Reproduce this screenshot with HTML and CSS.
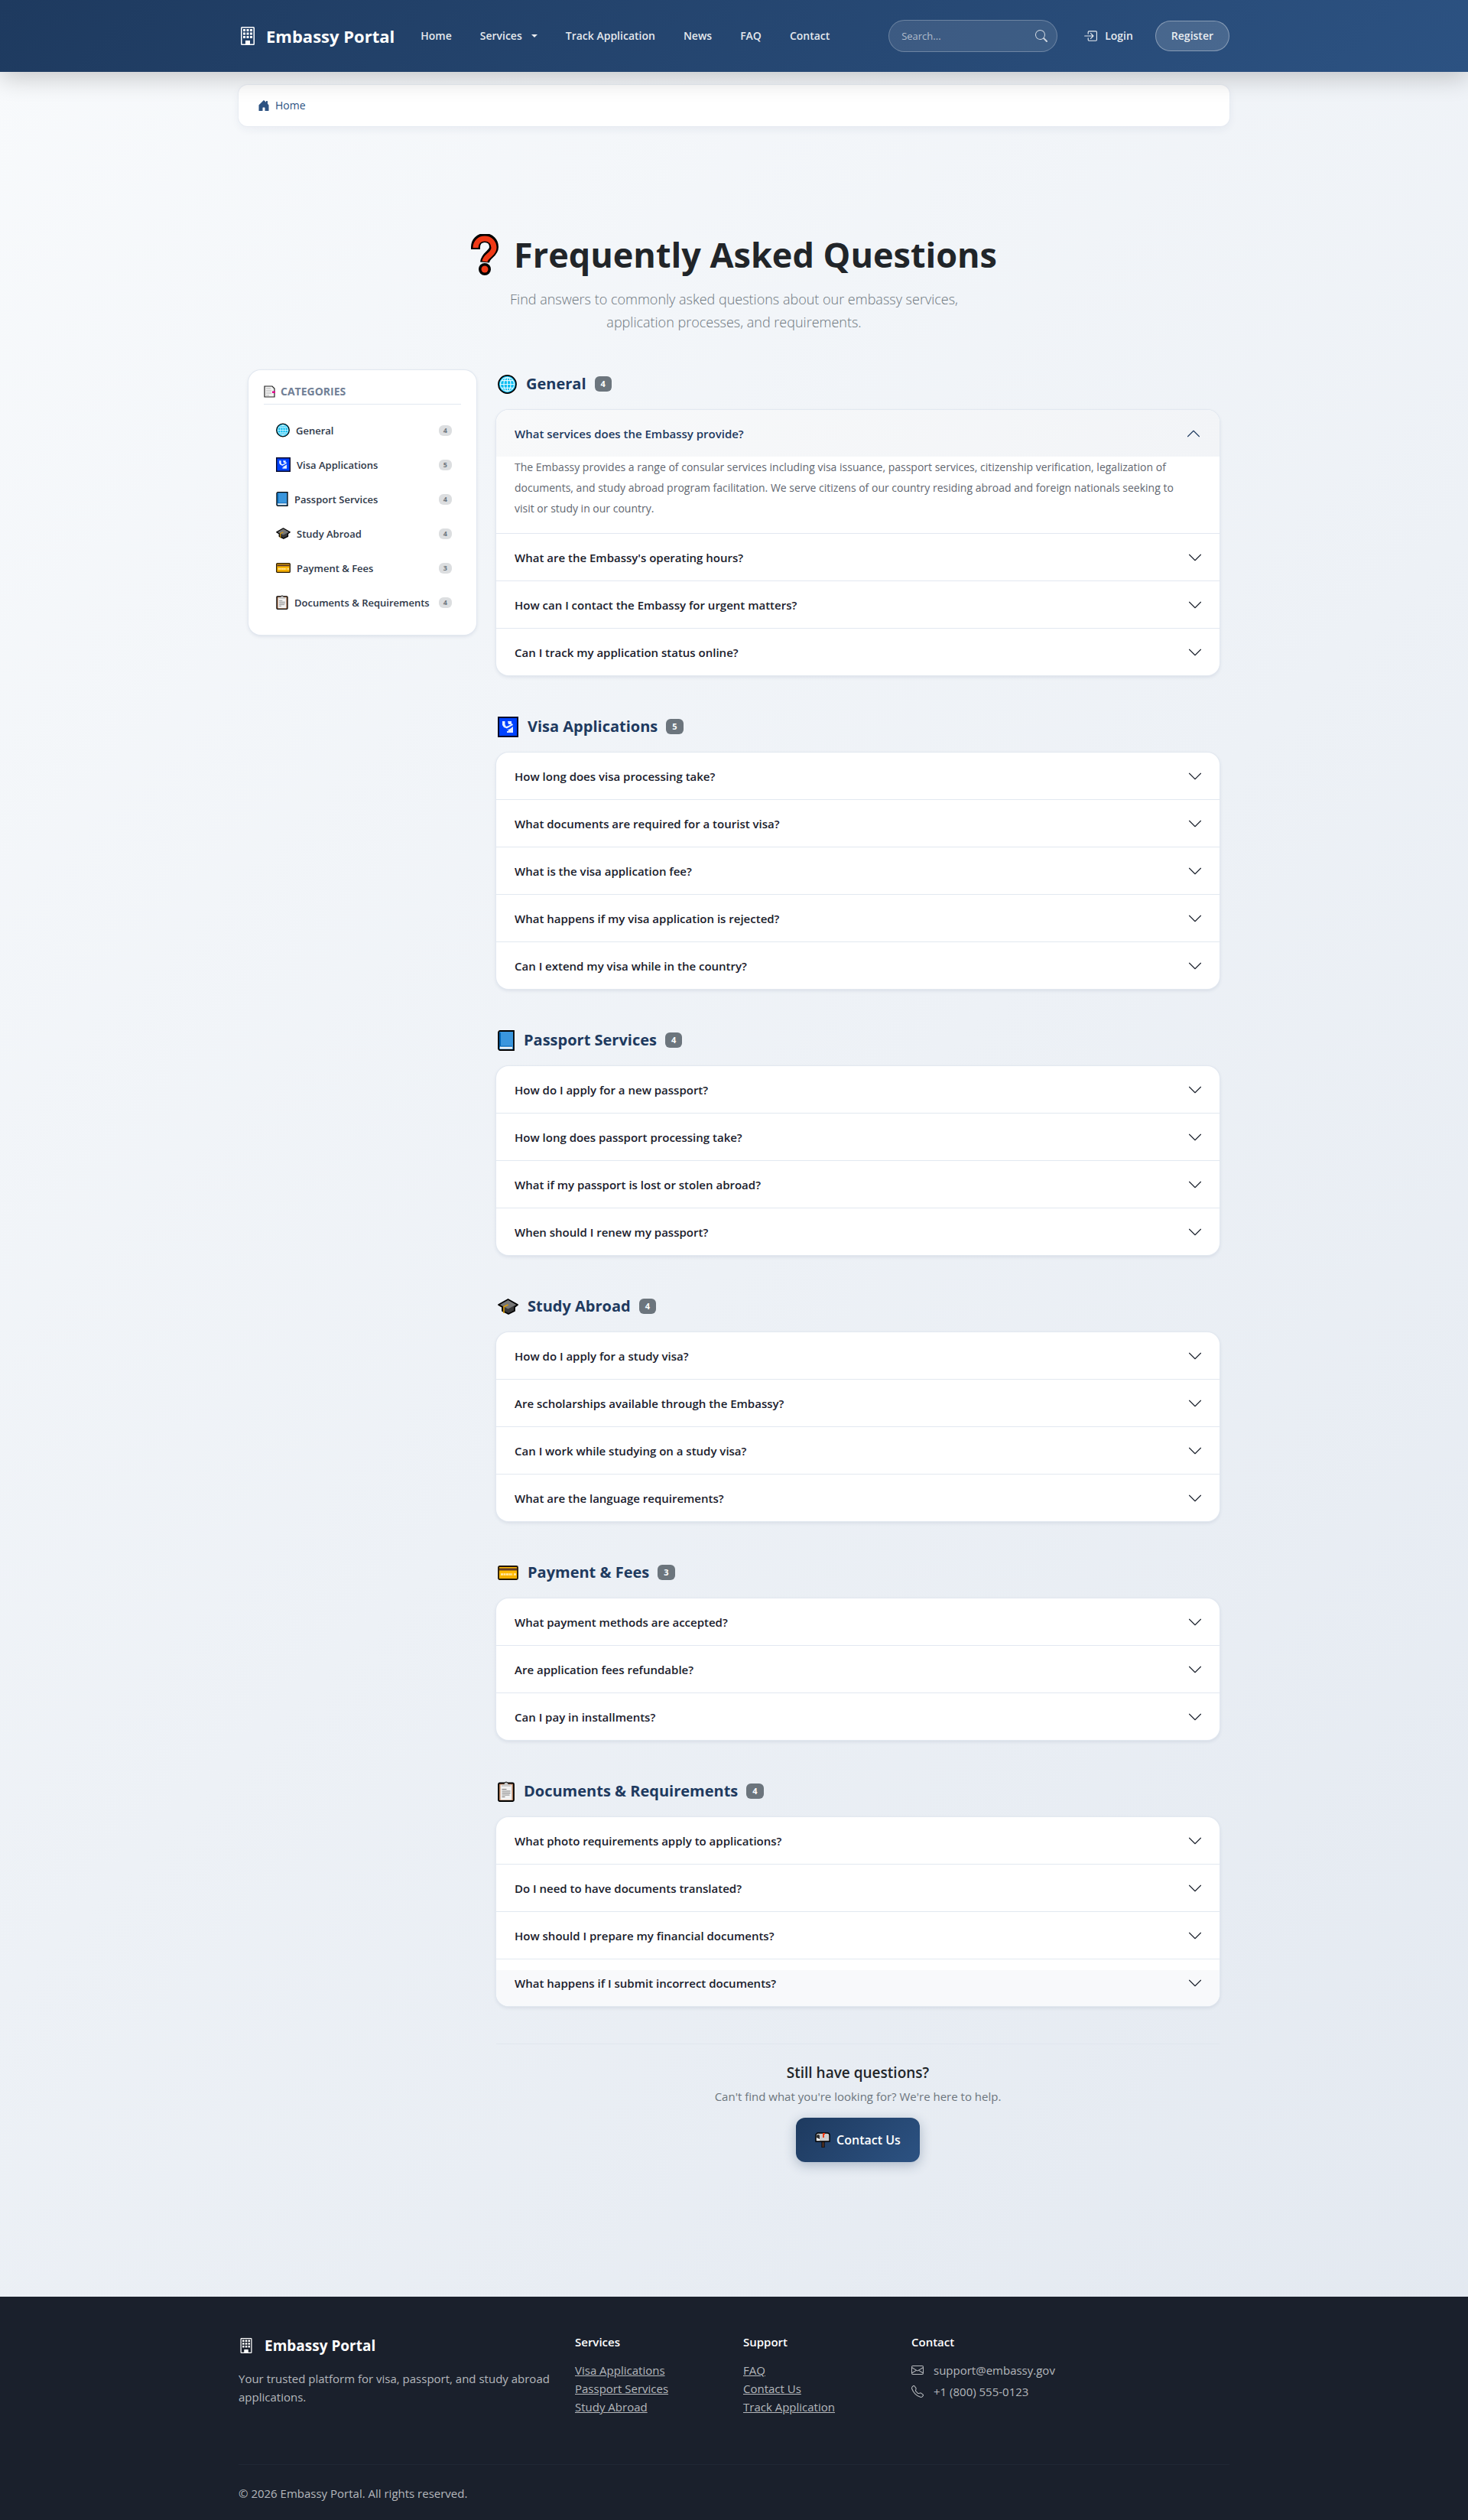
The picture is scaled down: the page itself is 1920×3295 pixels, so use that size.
FILE: index.html
```
<!DOCTYPE html>
<html lang="en">
<head>
<meta charset="utf-8">
<meta name="viewport" content="width=device-width, initial-scale=1">
<title>FAQ - Embassy Portal</title>
<link rel="stylesheet" href="styles.css">
</head>
<body>

<!-- shared icons -->
<svg class="sprite" aria-hidden="true">
  <symbol id="i-building" viewBox="0 0 16 16">
    <path fill-rule="evenodd" d="M3 0h10a1 1 0 0 1 1 1v14a1 1 0 0 1-1 1H3a1 1 0 0 1-1-1V1a1 1 0 0 1 1-1zm0 1v14h3v-2.500a.5.5 0 0 1 .5-.5h3a.5.5 0 0 1 .5.5V15h3V1z"/>
    <path d="M4 2h2v2H4zM7 2h2v2H7zM10 2h2v2h-2zM4 5h2v2H4zM7 5h2v2H7zM10 5h2v2h-2zM4 8h2v2H4zM7 8h2v2H7zM10 8h2v2h-2zM6 12h4v3.500H6z"/>
  </symbol>
  <symbol id="i-house" viewBox="0 0 16 16">
    <path d="M6.500 14.500v-3.505c0-.245.25-.495.5-.495h2c.25 0 .5.25.5.5v3.500a.5.5 0 0 0 .5.5h4a.5.5 0 0 0 .5-.5v-7a.5.5 0 0 0-.146-.354L13 5.793V2.500a.5.5 0 0 0-.5-.5h-1a.5.5 0 0 0-.5.5v1.293L8.354 1.146a.5.5 0 0 0-.708 0l-6 6A.5.5 0 0 0 1.500 7.500v7a.5.5 0 0 0 .5.5h4a.5.5 0 0 0 .5-.5"/>
  </symbol>
  <symbol id="i-search" viewBox="0 0 16 16">
    <path d="M11.742 10.344a6.500 6.500 0 1 0-1.397 1.398h-.001q.044.06.098.115l3.850 3.850a1 1 0 0 0 1.415-1.414l-3.850-3.850a1 1 0 0 0-.115-.1zM12 6.500a5.500 5.500 0 1 1-11 0 5.500 5.500 0 0 1 11 0"/>
  </symbol>
  <symbol id="i-login" viewBox="0 0 16 16">
    <path d="M6 3.500a.5.5 0 0 1 .5-.5h8a.5.5 0 0 1 .5.5v9a.5.5 0 0 1-.5.5h-8a.5.5 0 0 1-.5-.5v-2a.5.5 0 0 0-1 0v2A1.500 1.500 0 0 0 6.500 14h8a1.500 1.500 0 0 0 1.500-1.500v-9A1.500 1.500 0 0 0 14.500 2h-8A1.500 1.500 0 0 0 5 3.500v2a.5.5 0 0 0 1 0z"/>
    <path d="M11.854 8.354a.5.5 0 0 0 0-.708l-3-3a.5.5 0 1 0-.708.708L10.293 7.500H1.500a.5.5 0 0 0 0 1h8.793l-2.147 2.146a.5.5 0 0 0 .708.708z"/>
  </symbol>
  <symbol id="i-chevron" viewBox="0 0 16 16">
    <path d="M2 5l6 6 6-6" fill="none" stroke="currentColor" stroke-width=".9" stroke-linecap="round" stroke-linejoin="round"/>
  </symbol>
  <symbol id="i-mail" viewBox="0 0 16 16">
    <path d="M0 4a2 2 0 0 1 2-2h12a2 2 0 0 1 2 2v8a2 2 0 0 1-2 2H2a2 2 0 0 1-2-2zm2-1a1 1 0 0 0-1 1v.217l7 4.200 7-4.200V4a1 1 0 0 0-1-1zm13 2.383-4.708 2.825L15 11.105zm-.034 6.876-5.640-3.471L8 9.583l-1.326-.795-5.640 3.470A1 1 0 0 0 2 13h12a1 1 0 0 0 .966-.741M1 11.105l4.708-2.897L1 5.383z"/>
  </symbol>
  <symbol id="i-phone" viewBox="0 0 16 16">
    <path d="M3.654 1.328a.678.678 0 0 0-1.015-.063L1.605 2.300c-.483.484-.661 1.169-.45 1.770a17.600 17.600 0 0 0 4.168 6.608 17.600 17.600 0 0 0 6.608 4.168c.601.211 1.286.033 1.770-.45l1.034-1.034a.678.678 0 0 0-.063-1.015l-2.307-1.794a.68.68 0 0 0-.58-.122l-2.190.547a1.750 1.750 0 0 1-1.657-.459L5.482 8.062a1.750 1.750 0 0 1-.46-1.657l.548-2.190a.68.68 0 0 0-.122-.58zM1.884.511a1.745 1.745 0 0 1 2.612.163L6.290 2.980c.329.423.445.974.315 1.494l-.547 2.190a.68.68 0 0 0 .178.643l2.457 2.457a.68.68 0 0 0 .644.178l2.189-.547a1.750 1.750 0 0 1 1.494.315l2.306 1.794c.829.645.905 1.870.163 2.611l-1.034 1.034c-.74.740-1.846 1.065-2.877.702a18.600 18.600 0 0 1-7.010-4.420 18.600 18.600 0 0 1-4.420-7.009c-.362-1.030-.037-2.137.703-2.877z"/>
  </symbol>

  <symbol id="e-question" viewBox="0 0 36 54">
    <path d="M6 20v-3C6 10 11 5 18 5s12 5 12 12c0 9-11 10-12 20" fill="none" stroke="#000" stroke-width="12"/>
    <circle cx="18" cy="46" r="8" fill="#000"/>
    <path d="M6 17C6 10 11 5 18 5s12 5 12 12c0 9-11 10-12 18" fill="none" stroke="#f03a17" stroke-width="7" transform="translate(0 1)"/>
    <circle cx="18" cy="46" r="4.500" fill="#f03a17"/>
  </symbol>
  <symbol id="e-tabs" viewBox="0 0 16 16">
    <path d="M1 1h10l3 3v11H1z" fill="#f2f2f2" stroke="#222" stroke-width="1.200"/>
    <path d="M3 4h6M3 7h7M3 10h7M3 13h4" stroke="#b5b5b5"/>
    <path d="M11 7.500h4v2.500h-4z" fill="#e3008c"/>
  </symbol>
  <symbol id="e-globe" viewBox="0 0 26 26">
    <circle cx="13" cy="13" r="12" fill="#00bcf2" stroke="#000" stroke-width="1.800"/>
    <g fill="none" stroke="#e6f8fe" stroke-width="1.200">
      <circle cx="13" cy="13" r="9.500"/>
      <ellipse cx="13" cy="13" rx="4.700" ry="9.500"/>
      <path d="M13 3v20M3 13h20M5 8h16M5 18h16"/>
    </g>
  </symbol>
  <symbol id="e-passport-control" viewBox="0 0 27 27">
    <path d="M1 1h25v25H1z" fill="#0042ff" stroke="#05082b" stroke-width="2"/>
    <path d="M6 6h3.500v4.500L11 13l3-1 5-3 1 2-8 4.500-4-1.500-2-3z" fill="#e8f0ff"/>
    <path d="M13 6h5v4h-4zM20 13v8h-8v-2h2v-1h-2l4-2z" fill="#e8f0ff"/>
  </symbol>
  <symbol id="e-book" viewBox="0 0 22 27">
    <path d="M3 1h18v25H3a2 2 0 0 1-2-2V3a2 2 0 0 1 2-2z" fill="#3a96dd" stroke="#000" stroke-width="1.800"/>
    <path d="M2 3h2v19H2z" fill="#0063b1"/>
    <path d="M3 21.500h16v3H3z" fill="#f2f2f2"/>
    <path d="M4 21h15" stroke="#0063b1"/>
  </symbol>
  <symbol id="e-cap" viewBox="0 0 27 21">
    <path d="M13.500 1L26 8l-4 3v5l-8 4-8-4v-5L1 8z" fill="#383838" stroke="#000" stroke-width="1.800" stroke-linejoin="round"/>
    <path d="M13.500 2L24 8l-10.500 5.500L3 8z" fill="#767676"/>
    <path d="M13.500 8L8 10.500V19" fill="none" stroke="#e09d00" stroke-width="1.500"/>
  </symbol>
  <symbol id="e-card" viewBox="0 0 27 19">
    <rect x="1" y="1" width="25" height="17" rx="1.500" fill="#ffb900" stroke="#201300" stroke-width="1.800"/>
    <path d="M2 3.500h23v3H2z" fill="#603b2a"/>
    <path d="M4 11.500h15M21 11.500h3" stroke="#ffe8a8" stroke-width="2.500" stroke-dasharray="3 .5"/>
    <path d="M3 15h21" stroke="#e09d00"/>
  </symbol>
  <symbol id="e-clipboard" viewBox="0 0 22 27">
    <rect x="1" y="2.500" width="20" height="23.500" rx="1.500" fill="#b9815d" stroke="#000" stroke-width="1.800"/>
    <path d="M3.500 4.500h15v20h-15z" fill="#f2f2f2"/>
    <path d="M5 7V5h3l1-3h4l1 3h3v2z" fill="#ccc"/>
    <path d="M8.500 3.500a2.500 2.500 0 0 1 5 0" fill="none" stroke="#222"/>
    <path d="M5.500 10.500h6M5.500 13h11M5.500 15.500h11M5.500 18h10M5.500 20.500h4" stroke="#767676"/>
  </symbol>
  <symbol id="e-mailbox" viewBox="0 0 20 20">
    <path d="M9 12h3v8H9z" fill="#603b2a" stroke="#000"/>
    <path d="M1 12V4a3 3 0 0 1 3-3h12a3 3 0 0 1 3 3v8z" fill="#ccc" stroke="#000" stroke-width="1.400"/>
    <path d="M2 11V5a2 2 0 0 1 4 0v6z" fill="#333"/>
    <path d="M2 7l4 2v2H2z" fill="#fff"/>
    <path d="M10 1h3v2h-1v4h-2z" fill="#f03a17"/>
  </symbol>
</svg>

<header class="navbar">
  <div class="container navbar-inner">
    <a class="brand" href="#"><svg class="brand-icon"><use href="#i-building"/></svg>Embassy Portal</a>
    <nav class="nav">
      <a href="#">Home</a>
      <a class="dropdown" href="#">Services</a>
      <a href="#">Track Application</a>
      <a href="#">News</a>
      <a href="#">FAQ</a>
      <a href="#">Contact</a>
    </nav>
    <form class="search" role="search">
      <input type="search" placeholder="Search..." aria-label="Search">
      <button type="submit" aria-label="Search"><svg><use href="#i-search"/></svg></button>
    </form>
    <a class="login" href="#"><svg><use href="#i-login"/></svg>Login</a>
    <a class="register" href="#">Register</a>
  </div>
</header>

<div class="container">
  <nav class="breadcrumb" aria-label="Breadcrumb">
    <a href="#"><svg><use href="#i-house"/></svg>Home</a>
  </nav>
</div>

<main class="faq">
  <div class="faq-header">
    <h1><svg><use href="#e-question"/></svg>Frequently Asked Questions</h1>
    <p>Find answers to commonly asked questions about our embassy services, application processes, and requirements.</p>
  </div>

  <div class="faq-layout">
    <aside class="categories">
      <h2><svg><use href="#e-tabs"/></svg>Categories</h2>
      <ul>
        <li><a href="#general"><svg class="w-globe"><use href="#e-globe"/></svg>General<span class="count">4</span></a></li>
        <li><a href="#visa"><svg class="w-wide"><use href="#e-passport-control"/></svg>Visa Applications<span class="count">5</span></a></li>
        <li><a href="#passport"><svg class="w-slim"><use href="#e-book"/></svg>Passport Services<span class="count">4</span></a></li>
        <li><a href="#study"><svg class="w-wide"><use href="#e-cap"/></svg>Study Abroad<span class="count">4</span></a></li>
        <li><a href="#payment"><svg class="w-wide"><use href="#e-card"/></svg>Payment &amp; Fees<span class="count">3</span></a></li>
        <li><a href="#documents"><svg class="w-slim"><use href="#e-clipboard"/></svg>Documents &amp; Requirements<span class="count">4</span></a></li>
      </ul>
    </aside>

    <div class="faq-content">
      <section class="faq-section" id="general">
        <h2><svg class="w-globe"><use href="#e-globe"/></svg>General<span class="badge">4</span></h2>
        <div class="accordion">
          <div class="item">
            <button class="question open" type="button" aria-expanded="true">What services does the Embassy provide?<svg><use href="#i-chevron"/></svg></button>
            <p class="answer">The Embassy provides a range of consular services including visa issuance, passport services, citizenship verification, legalization of documents, and study abroad program facilitation. We serve citizens of our country residing abroad and foreign nationals seeking to visit or study in our country.</p>
          </div>
          <div class="item"><button class="question" type="button">What are the Embassy's operating hours?<svg><use href="#i-chevron"/></svg></button></div>
          <div class="item"><button class="question" type="button">How can I contact the Embassy for urgent matters?<svg><use href="#i-chevron"/></svg></button></div>
          <div class="item"><button class="question" type="button">Can I track my application status online?<svg><use href="#i-chevron"/></svg></button></div>
        </div>
      </section>

      <section class="faq-section" id="visa">
        <h2><svg class="w-wide"><use href="#e-passport-control"/></svg>Visa Applications<span class="badge">5</span></h2>
        <div class="accordion">
          <div class="item"><button class="question" type="button">How long does visa processing take?<svg><use href="#i-chevron"/></svg></button></div>
          <div class="item"><button class="question" type="button">What documents are required for a tourist visa?<svg><use href="#i-chevron"/></svg></button></div>
          <div class="item"><button class="question" type="button">What is the visa application fee?<svg><use href="#i-chevron"/></svg></button></div>
          <div class="item"><button class="question" type="button">What happens if my visa application is rejected?<svg><use href="#i-chevron"/></svg></button></div>
          <div class="item"><button class="question" type="button">Can I extend my visa while in the country?<svg><use href="#i-chevron"/></svg></button></div>
        </div>
      </section>

      <section class="faq-section" id="passport">
        <h2><svg class="w-slim"><use href="#e-book"/></svg>Passport Services<span class="badge">4</span></h2>
        <div class="accordion">
          <div class="item"><button class="question" type="button">How do I apply for a new passport?<svg><use href="#i-chevron"/></svg></button></div>
          <div class="item"><button class="question" type="button">How long does passport processing take?<svg><use href="#i-chevron"/></svg></button></div>
          <div class="item"><button class="question" type="button">What if my passport is lost or stolen abroad?<svg><use href="#i-chevron"/></svg></button></div>
          <div class="item"><button class="question" type="button">When should I renew my passport?<svg><use href="#i-chevron"/></svg></button></div>
        </div>
      </section>

      <section class="faq-section" id="study">
        <h2><svg class="w-wide"><use href="#e-cap"/></svg>Study Abroad<span class="badge">4</span></h2>
        <div class="accordion">
          <div class="item"><button class="question" type="button">How do I apply for a study visa?<svg><use href="#i-chevron"/></svg></button></div>
          <div class="item"><button class="question" type="button">Are scholarships available through the Embassy?<svg><use href="#i-chevron"/></svg></button></div>
          <div class="item"><button class="question" type="button">Can I work while studying on a study visa?<svg><use href="#i-chevron"/></svg></button></div>
          <div class="item"><button class="question" type="button">What are the language requirements?<svg><use href="#i-chevron"/></svg></button></div>
        </div>
      </section>

      <section class="faq-section" id="payment">
        <h2><svg class="w-wide"><use href="#e-card"/></svg>Payment &amp; Fees<span class="badge">3</span></h2>
        <div class="accordion">
          <div class="item"><button class="question" type="button">What payment methods are accepted?<svg><use href="#i-chevron"/></svg></button></div>
          <div class="item"><button class="question" type="button">Are application fees refundable?<svg><use href="#i-chevron"/></svg></button></div>
          <div class="item"><button class="question" type="button">Can I pay in installments?<svg><use href="#i-chevron"/></svg></button></div>
        </div>
      </section>

      <section class="faq-section" id="documents">
        <h2><svg class="w-slim"><use href="#e-clipboard"/></svg>Documents &amp; Requirements<span class="badge">4</span></h2>
        <div class="accordion">
          <div class="item"><button class="question" type="button">What photo requirements apply to applications?<svg><use href="#i-chevron"/></svg></button></div>
          <div class="item"><button class="question" type="button">Do I need to have documents translated?<svg><use href="#i-chevron"/></svg></button></div>
          <div class="item"><button class="question" type="button">How should I prepare my financial documents?<svg><use href="#i-chevron"/></svg></button></div>
          <div class="item"><button class="question shaded" type="button">What happens if I submit incorrect documents?<svg><use href="#i-chevron"/></svg></button></div>
        </div>
      </section>

      <div class="cta">
        <h2>Still have questions?</h2>
        <p>Can't find what you're looking for? We're here to help.</p>
        <a class="cta-button" href="#"><svg><use href="#e-mailbox"/></svg>Contact Us</a>
      </div>
    </div>
  </div>
</main>

<footer class="footer">
  <div class="container">
    <div class="footer-columns">
      <div class="footer-about">
        <div class="footer-brand"><svg><use href="#i-building"/></svg>Embassy Portal</div>
        <p>Your trusted platform for visa, passport, and study abroad applications.</p>
      </div>
      <div>
        <h3>Services</h3>
        <ul>
          <li><a href="#">Visa Applications</a></li>
          <li><a href="#">Passport Services</a></li>
          <li><a href="#">Study Abroad</a></li>
        </ul>
      </div>
      <div>
        <h3>Support</h3>
        <ul>
          <li><a href="#">FAQ</a></li>
          <li><a href="#">Contact Us</a></li>
          <li><a href="#">Track Application</a></li>
        </ul>
      </div>
      <div>
        <h3>Contact</h3>
        <ul class="contact-list">
          <li><svg><use href="#i-mail"/></svg>support@embassy.gov</li>
          <li><svg><use href="#i-phone"/></svg>+1 (800) 555-0123</li>
        </ul>
      </div>
    </div>
    <p class="copyright">© 2026 Embassy Portal. All rights reserved.</p>
  </div>
</footer>

</body>
</html>
```
FILE: styles.css
```
* {
    box-sizing: border-box;
}
body {
    margin: 0;
    font-family: "Segoe UI", "Open Sans", "Noto Sans", sans-serif;
    font-size: 15px;
    line-height: 24px;
    color: #212529;
    background: linear-gradient(135deg, #f8fafc 0%, #e2e8f0 100%);
}
h1, h2, h3, p, ul {
    margin: 0;
    padding: 0;
}
ul {
    list-style: none;
}
a {
    color: inherit;
    text-decoration: none;
}
button, input {
    font: inherit;
    color: inherit;
    border: 0;
    padding: 0;
    background: none;
}
svg {
    flex: none;
    fill: currentColor;
}
.sprite {
    display: none;
}
.container {
    max-width: 1320px;
    margin: 0 auto;
    padding: 0 12px;
}

/* navbar */
.navbar {
    position: sticky;
    top: 0;
    z-index: 10;
    background: linear-gradient(135deg, #1e3a5f 0%, #2c5282 100%);
    box-shadow: 0 8px 32px rgba(0, 0, 0, 0.2);
    color: #fff;
}
.navbar-inner {
    display: flex;
    align-items: center;
    min-height: 94px;
}
.brand {
    display: flex;
    align-items: center;
    gap: 12px;
    font-size: 22px;
    font-weight: 700;
    white-space: nowrap;
}
.brand-icon {
    width: 24px;
    height: 24px;
}
.nav {
    display: flex;
    gap: 37px;
    margin-left: 34px;
    font-size: 14px;
    font-weight: 600;
    color: rgba(255, 255, 255, 0.9);
    white-space: nowrap;
}
.dropdown::after {
    content: "";
    display: inline-block;
    margin-left: 12px;
    vertical-align: 3px;
    border: 4px solid transparent;
    border-top-color: currentColor;
    border-bottom: 0;
}
.search {
    display: flex;
    align-items: center;
    width: 221px;
    height: 42px;
    margin-left: auto;
    padding: 0 12px 0 16px;
    border: 1px solid rgba(255, 255, 255, 0.25);
    border-radius: 21px;
    background: rgba(255, 255, 255, 0.1);
}
.search input {
    flex: 1;
    min-width: 0;
    font-size: 13px;
    outline: 0;
}
.search input::placeholder {
    color: rgba(255, 255, 255, 0.6);
}
.search button {
    display: flex;
    color: rgba(255, 255, 255, 0.75);
}
.search svg {
    width: 16px;
    height: 16px;
}
.login {
    display: flex;
    align-items: center;
    gap: 10px;
    margin: 0 29px 0 34px;
    font-size: 14px;
    font-weight: 600;
    color: rgba(255, 255, 255, 0.9);
}
.login svg {
    width: 18px;
    height: 18px;
}
.register {
    padding: 7px 20px;
    border: 1px solid rgba(255, 255, 255, 0.35);
    border-radius: 20px;
    background: rgba(255, 255, 255, 0.15);
    font-size: 14px;
    font-weight: 600;
    color: rgba(255, 255, 255, 0.9);
}

.breadcrumb {
    margin-top: 17px;
    padding: 15px 25px;
    border-radius: 12px;
    background: #fff;
    box-shadow: 0 0 0 1px rgba(226, 232, 240, 0.6), 0 4px 12px rgba(30, 58, 95, 0.06);
    color: #2c5282;
    font-size: 14px;
    font-weight: 500;
}
.breadcrumb a {
    display: flex;
    align-items: center;
    gap: 7px;
}
.breadcrumb svg {
    width: 16px;
    height: 16px;
}

/* faq page */
.faq {
    max-width: 1294px;
    margin: 0 auto;
    padding: 139px 12px 176px;
}
.faq-header {
    margin-bottom: 48px;
    text-align: center;
}
.faq-header h1 {
    display: flex;
    justify-content: center;
    align-items: center;
    gap: 20px;
    margin-bottom: 14px;
    font-size: 45px;
    line-height: 58px;
    font-weight: 700;
}
.faq-header h1 svg {
    width: 36px;
    height: 54px;
}
.faq-header p {
    max-width: 640px;
    margin: 0 auto;
    font-size: 18px;
    line-height: 30px;
    font-weight: 300;
    color: #6c757d;
}
.faq-layout {
    display: grid;
    grid-template-columns: 298px 1fr;
    gap: 26px;
    align-items: start;
}
.categories,
.accordion {
    border-radius: 16px;
    background: #fff;
    box-shadow: 0 0 0 1px #e2e8f0, 0 2px 5px rgba(30, 58, 95, 0.12);
}
.categories {
    padding: 20px;
}
.categories h2 {
    display: flex;
    align-items: center;
    gap: 6px;
    margin-bottom: 11px;
    padding-bottom: 8px;
    border-bottom: 1px solid #e2e8f0;
    font-size: 14px;
    line-height: 16px;
    font-weight: 700;
    text-transform: uppercase;
    color: #718096;
}
.categories h2 svg {
    width: 16px;
    height: 16px;
}
.categories a {
    display: flex;
    align-items: center;
    height: 45px;
    padding: 0 12px 0 16px;
    font-size: 13px;
    font-weight: 600;
    color: #2d3748;
    white-space: nowrap;
}
.categories a svg {
    height: 19px;
    margin-right: 8px;
}
.categories .w-globe {
    width: 18px;
}
.categories .w-wide {
    width: 19px;
}
.categories .w-slim {
    width: 16px;
}
.count {
    margin-left: auto;
    padding: 0 6px;
    border-radius: 6px;
    background: #dcdee0;
    font-size: 9px;
    line-height: 14px;
    font-weight: 700;
    color: #6c757d;
}
.faq-section {
    margin-bottom: 49px;
}
.faq-section h2 {
    display: flex;
    align-items: center;
    margin-bottom: 16px;
    padding-left: 2px;
    font-size: 20px;
    line-height: 36px;
    font-weight: 700;
    color: #1e3a5f;
}
.faq-section h2 svg {
    height: 27px;
    margin-right: 12px;
}
.faq-section .w-globe {
    width: 25px;
}
.faq-section .w-wide {
    width: 27px;
}
.faq-section .w-slim {
    width: 22px;
}
.badge {
    margin-left: 11px;
    padding: 0 8px;
    border-radius: 6px;
    background: #6c757d;
    font-size: 11px;
    line-height: 20px;
    color: #fff;
}
.accordion {
    overflow: hidden;
}
.item + .item {
    border-top: 1px solid #e2e8f0;
}
.question {
    display: flex;
    justify-content: space-between;
    align-items: center;
    width: 100%;
    min-height: 61px;
    padding: 0 22px 0 24px;
    font-size: 15px;
    font-weight: 600;
    text-align: left;
    color: #1a202c;
}
.question svg {
    width: 20px;
    height: 20px;
}
.question.open {
    padding-right: 24px;
    background: linear-gradient(135deg, #f8f9fa 0%, #f2f4f7 100%);
    color: #1e3a5f;
}
.question.open svg {
    transform: rotate(180deg);
}
.question.shaded {
    background: linear-gradient(#fff 14px, #f8f9fb 14px);
}
.answer {
    padding: 0 40px 19px 24px;
    font-size: 14px;
    line-height: 27px;
    color: #5f6670;
}

.cta {
    padding-top: 25px;
    border-top: 1px solid #e1e7ef;
    text-align: center;
}
.cta h2 {
    margin-bottom: 7px;
    font-size: 19px;
    line-height: 24px;
    font-weight: 600;
}
.cta p {
    margin-bottom: 16px;
    color: #6c757d;
}
.cta-button {
    display: inline-flex;
    align-items: center;
    gap: 8px;
    padding: 17px 25px;
    border-radius: 12px;
    background: linear-gradient(135deg, #1e3a5f 0%, #2c5282 100%);
    box-shadow: 0 4px 15px rgba(30, 58, 95, 0.3);
    font-size: 16px;
    font-weight: 600;
    color: #fff;
    vertical-align: top;
}
.cta-button svg {
    width: 20px;
    height: 20px;
}

/* footer */
.footer {
    padding: 48px 0 23px;
    background: #1a202c;
    color: #b5b8bc;
}
.footer-columns {
    display: grid;
    grid-template-columns: 2fr 1fr 1fr 2fr;
    min-height: 171px;
    margin-right: -24px;
}
.footer-about {
    padding-right: 24px;
}
.footer-brand {
    display: flex;
    align-items: center;
    gap: 14px;
    margin-bottom: 15px;
    font-size: 19px;
    line-height: 32px;
    font-weight: 700;
    color: #fff;
}
.footer-brand svg {
    width: 20px;
    height: 20px;
}
.footer h3 {
    margin-bottom: 14px;
    font-size: 15px;
    line-height: 22px;
    font-weight: 600;
    color: #fff;
}
.footer a {
    text-decoration: underline;
}
.contact-list {
    display: grid;
    gap: 4px;
}
.contact-list li {
    display: flex;
    align-items: center;
    gap: 13px;
}
.contact-list svg {
    width: 16px;
    height: 16px;
}
.copyright {
    padding-top: 25px;
    border-top: 1px solid #212835;
}
```
